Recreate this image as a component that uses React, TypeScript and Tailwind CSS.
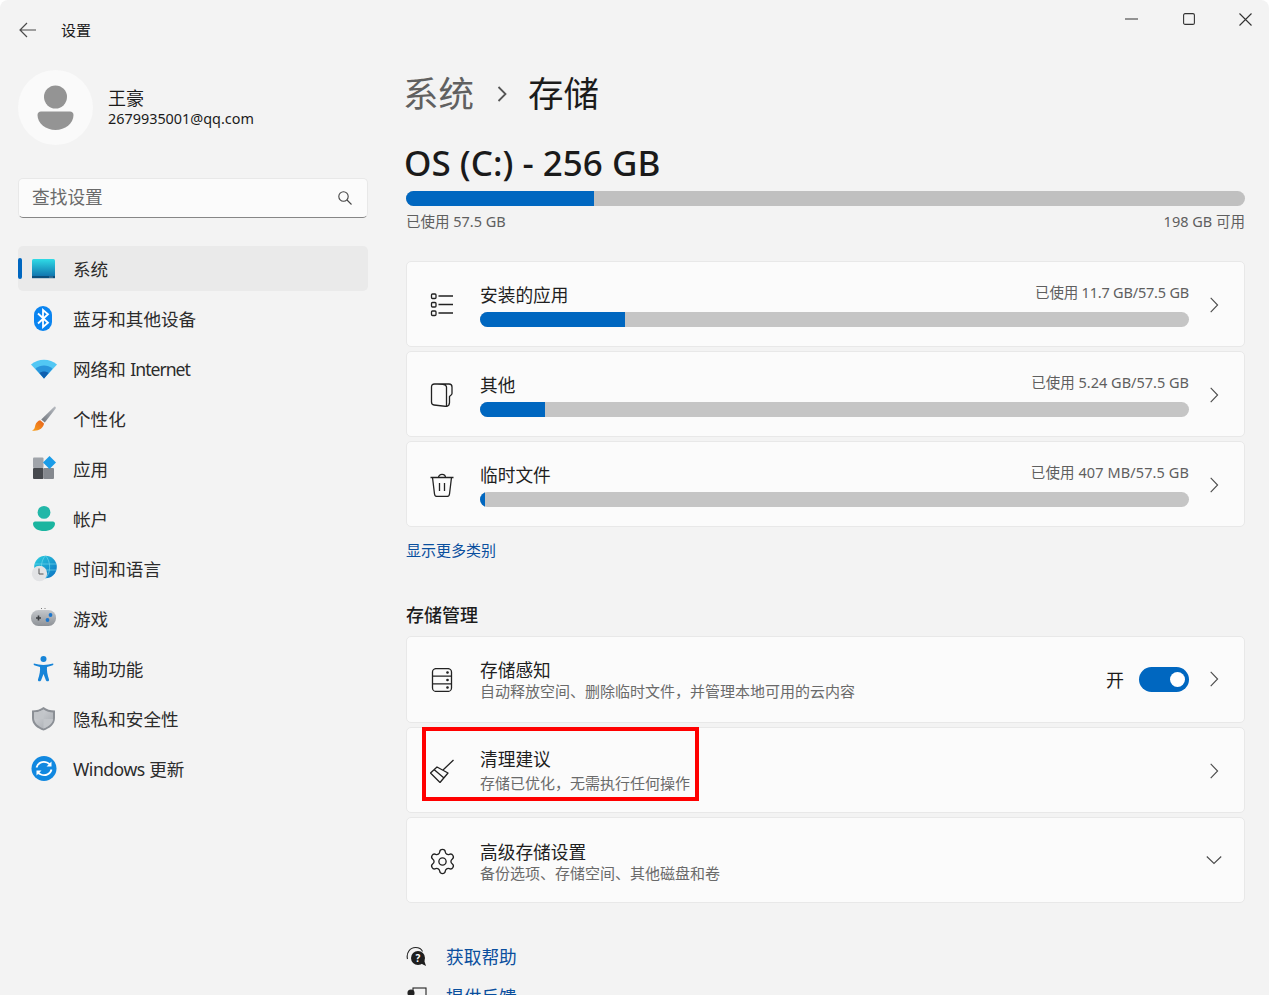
import React from "react";
import { Settings } from "lucide-react";

const Chevron = ({ className = "" }: { className?: string }) => (
  <svg width="16" height="16" viewBox="0 0 16 16" fill="none" stroke="#4a4a4a" strokeWidth="1.1" className={`shrink-0 ${className}`}>
    <path d="M4.7 0.8 11.6 8 4.7 15.2" />
  </svg>
);

const IconSlot = ({ children }: { children: React.ReactNode }) => (
  <svg width="28" height="28" viewBox="0 0 28 28" className="shrink-0">{children}</svg>
);

const navIcons: Record<string, React.ReactNode> = {
  system: (
    <IconSlot>
      <defs>
        <linearGradient id="sys" x1="0" y1="0" x2="0" y2="1">
          <stop offset="0" stopColor="#2fdbe6" />
          <stop offset="1" stopColor="#0d6aa8" />
        </linearGradient>
      </defs>
      <rect x="2" y="4" width="23" height="19" rx="1.5" fill="url(#sys)" />
      <rect x="2" y="21" width="23" height="2.2" fill="#0b4f7c" />
      <circle cx="20" cy="22" r=".5" fill="#cfe8f5" />
      <circle cx="22" cy="22" r=".5" fill="#cfe8f5" />
    </IconSlot>
  ),
  bluetooth: (
    <IconSlot>
      <rect x="4" y="1" width="18" height="25" rx="9" fill="#0a84f0" />
      <path d="M8 8.500 18 17.800 13 22V5L18 9.200 8 18.500" fill="none" stroke="#fff" strokeWidth="1.8" />
    </IconSlot>
  ),
  wifi: (
    <IconSlot>
      <path d="M1 9.500C8 3 20 3 27 9.500L14 23.500Z" fill="#52c7f4" />
      <path d="M5.500 13.800C10.500 9.500 17.500 9.500 22.500 13.800L14 23.500Z" fill="#2a95dc" />
      <path d="M9.500 18C12 16 16 16 18.500 18L14 23.500Z" fill="#0f5fae" />
    </IconSlot>
  ),
  brush: (
    <IconSlot>
      <defs>
        <linearGradient id="brh" x1="0" y1="1" x2="1" y2="0">
          <stop offset="0" stopColor="#70757c" />
          <stop offset="1" stopColor="#b8bcc2" />
        </linearGradient>
        <linearGradient id="brb" x1="0" y1="1" x2="1" y2="0">
          <stop offset="0" stopColor="#f9a11b" />
          <stop offset="1" stopColor="#e65f1c" />
        </linearGradient>
      </defs>
      <path d="M24.500 1.500C26 1.500 26 3 25.500 3.800L14.800 17.500 11.200 14.500Z" fill="url(#brh)" />
      <path d="M10.200 15.200 14 18.500C13.500 23 8.500 26.600 2 25.600 5 24 4.500 23 5.400 20 6 17.600 8 15.600 10.200 15.200Z" fill="url(#brb)" />
    </IconSlot>
  ),
  apps: (
    <IconSlot>
      <rect x="3" y="2.500" width="10.500" height="10.500" fill="#a0a4aa" rx="1" />
      <rect x="3" y="13" width="10.500" height="11" fill="#46494e" rx="1" />
      <rect x="13.500" y="13" width="10.500" height="11" fill="#84888e" rx="1" />
      <path d="M19.500 1 26 7.500 19.500 14 13 7.500Z" fill="#1a9ce8" />
    </IconSlot>
  ),
  account: (
    <IconSlot>
      <circle cx="14" cy="7.400" r="6.400" fill="#22b7a8" />
      <path d="M3 18.500C3 17.500 4 16.500 5 16.500H23C24 16.500 25 17.500 25 18.500 25 23.500 19.500 26 14 26 8.500 26 3 23.500 3 18.500Z" fill="#1ab5a0" />
    </IconSlot>
  ),
  time: (
    <IconSlot>
      <defs>
        <linearGradient id="glb" x1="0" y1="0" x2="1" y2="1">
          <stop offset="0" stopColor="#2bd0df" />
          <stop offset="1" stopColor="#0b6fc2" />
        </linearGradient>
      </defs>
      <circle cx="15.500" cy="12" r="11.300" fill="url(#glb)" />
      <path d="M15.500 .7C10 6 10 18 15.500 23.300 21 18 21 6 15.500 .7ZM4.500 9H26.500M4.500 15H26.500" fill="none" stroke="#7adcf0" strokeWidth=".6" />
      <circle cx="9.500" cy="18.500" r="7.700" fill="#e2e3e5" />
      <path d="M9 13.500V19H13.500" fill="none" stroke="#555" strokeWidth="1" />
    </IconSlot>
  ),
  game: (
    <IconSlot>
      <defs>
        <linearGradient id="gm" x1="0" y1="0" x2="0" y2="1">
          <stop offset="0" stopColor="#c4c7cb" />
          <stop offset="1" stopColor="#8e9297" />
        </linearGradient>
      </defs>
      <rect x="1" y="5" width="25" height="16" rx="7.500" fill="url(#gm)" />
      <path d="M6 13H11M8.500 10.500V15.500" stroke="#3c3f43" strokeWidth="1.6" />
      <circle cx="20.500" cy="10" r="1.900" fill="#1c76cc" />
      <circle cx="17.500" cy="15" r="1.900" fill="#1c76cc" />
      <circle cx="11.500" cy="3.500" r=".5" fill="#555" />
      <circle cx="15" cy="3.500" r=".5" fill="#555" />
    </IconSlot>
  ),
  access: (
    <IconSlot>
      <circle cx="13.500" cy="4" r="3" fill="#1684d8" />
      <path d="M4 8.600C3 9.200 4 10.600 5 10.600L10 12C10.400 15 9.600 20 8 24.500 7.400 26.500 10 27 11 25.400L13.500 19 16 25.400C17 27 19.600 26.500 19 24.500 17.400 20 16.600 15 17 12L22 10.600C23 10.600 24 9.200 23 8.600 20 9.400 17 10 13.500 10 10 10 7 9.400 4 8.600Z" fill="#1684d8" />
    </IconSlot>
  ),
  shield: (
    <IconSlot>
      <defs>
        <linearGradient id="shl" x1="0" y1="0" x2="1" y2="1">
          <stop offset="0" stopColor="#d6d8dc" />
          <stop offset="1" stopColor="#a4a8ad" />
        </linearGradient>
      </defs>
      <path d="M13.500 2C16.500 4.500 20.500 5.500 25 5.500V13C25 19.500 19.500 23.500 13.500 25.500 7.500 23.500 2 19.500 2 13V5.500C6.500 5.500 10.500 4.500 13.500 2Z" fill="#8b8f95" />
      <path d="M13.500 4.500C16.500 6.500 19.500 7.500 23 7.500V13C23 18 18.500 21.500 13.500 23.500 8.500 21.500 4 18 4 13V7.500C7.500 7.500 10.500 6.500 13.500 4.500Z" fill="url(#shl)" />
      <path d="M13.500 4.500V14H4V7.500C7.500 7.500 10.500 6.500 13.500 4.500ZM13.500 14H23C23 18 18.500 21.500 13.500 23.500Z" fill="#c2c5c9" />
    </IconSlot>
  ),
  update: (
    <IconSlot>
      <circle cx="14" cy="13.500" r="12.500" fill="#1188e0" />
      <path d="M6.500 12.500C7.500 8 12.500 5.800 17 7.500 18.500 8.100 19.700 9.200 20.300 10.300M21.500 14.500C20.500 19 15.500 21.200 11 19.500 9.500 18.900 8.300 17.800 7.700 16.700" fill="none" stroke="#fff" strokeWidth="1.800" />
      <path d="M21.500 6.500V11.500H16.500ZM6.500 20.500V15.500H11.500Z" fill="#fff" />
    </IconSlot>
  ),
};

const navItems: [string, React.ReactNode][] = [
  ["system", "系统"],
  ["bluetooth", "蓝牙和其他设备"],
  ["wifi", <>网络和 <span className="tracking-[-1px]">Internet</span></>],
  ["brush", "个性化"],
  ["apps", "应用"],
  ["account", "帐户"],
  ["time", "时间和语言"],
  ["game", "游戏"],
  ["access", "辅助功能"],
  ["shield", "隐私和安全性"],
  ["update", <><span className="tracking-[-0.5px]">Windows</span> 更新</>],
];

const Line = ({ children, className = "" }: { children: React.ReactNode; className?: string }) => (
  <svg width="24" height="24" viewBox="0 0 24 24" fill="none" stroke="#222222" strokeWidth="1.3" className={`shrink-0 ${className}`}>{children}</svg>
);

const storageRows = [
  {
    title: "安装的应用",
    used: "已使用 11.7 GB/57.5 GB",
    usedClass: "tracking-[-0.2px]",
    fill: 145,
    icon: (
      <Line className="mt-[2px]">
        <rect x="1.500" y="1" width="4.500" height="4.500" rx="1" />
        <rect x="1.500" y="9.500" width="4.500" height="4.500" rx="1" />
        <rect x="1.500" y="18" width="4.500" height="4.500" rx="1" />
        <path d="M8.500 3H23M8.500 11.500H23M8.500 20H23" />
      </Line>
    ),
  },
  {
    title: "其他",
    used: "已使用 5.24 GB/57.5 GB",
    usedClass: "",
    fill: 65,
    icon: (
      <Line className="mt-[2px]">
        <path d="M4.500 1H19C21 1 22 2 22 4V10.500C22 12 20 12.500 19.500 13.500V19.500C19.500 21.500 18.500 23 16.500 23.500L4 22C2.500 21.800 1.500 20.800 1.500 19V4C1.500 2 2.500 1 4.500 1ZM4.500 1C9 1 16.500 .5 16.500 4V23.500" />
      </Line>
    ),
  },
  {
    title: "临时文件",
    used: "已使用 407 MB/57.5 GB",
    usedClass: "tracking-[0.1px]",
    fill: 5,
    icon: (
      <Line className="mt-[2px]">
        <path d="M.5 4.500H23.500M8.500 4.500C8.500 .3 15.500 .3 15.500 4.500M2.500 4.500 4.500 21C4.700 22.800 5.800 23.500 7 23.500H17C18.200 23.500 19.300 22.800 19.500 21L21.500 4.500M9.500 10V18M14.500 10V18" />
      </Line>
    ),
  },
];

const Bar = ({ fill, track }: { fill: number; track: string }) => (
  <div className={`h-[15px] rounded-full overflow-hidden ${track}`}>
    <div className="h-full bg-[#0067c0]" style={{ width: fill }} />
  </div>
);

export default function App() {
  return (
    <div className="h-[995px] w-[1269px] overflow-hidden flex rounded-t-lg bg-[#f3f3f3] text-[#1b1b1b] font-['Noto_Sans','Noto_Sans_CJK_SC',sans-serif]">
      <aside className="w-[406px] shrink-0 pl-[18px] pr-[38px]">
        <div className="h-[60px] flex items-center">
          <svg width="18" height="16" viewBox="0 0 18 16" fill="none" stroke="#4a4a4a" strokeWidth="1.2" className="ml-[1px]">
            <path d="M1 8H17M8 1 1 8 8 15" />
          </svg>
          <span className="ml-[24px] text-[15px]">设置</span>
        </div>
        <div className="h-[75px] mt-[10px] flex items-center">
          <div className="size-[75px] rounded-full bg-[#fafafa] flex items-center justify-center">
            <svg width="37" height="46" viewBox="0 0 37 46">
              <circle cx="18.500" cy="12" r="11.500" fill="#949494" />
              <path d="M0.500 30C0.500 28 2 26.500 4 26.500H33C35 26.500 36.500 28 36.500 30 36.500 38.500 28 45 18.500 45 9 45 .5 38.500 .5 30Z" fill="#949494" />
            </svg>
          </div>
          <div className="ml-[15px] -mt-[2px]">
            <div className="text-[18px] leading-[24px]">王豪</div>
            <div className="text-[14.400px] leading-[18px]">2679935001@qq.com</div>
          </div>
        </div>
        <div className="mt-[33px] h-[40px] rounded-[5px] bg-[#fbfbfb] border border-[#e8e8e8] border-b-[#868686] flex items-center justify-between pl-[13px] pr-[15px]">
          <span className="text-[17.700px] text-[#6a6a6a] -mt-[2px]">查找设置</span>
          <svg width="14" height="14" viewBox="0 0 14 14" fill="none" stroke="#444" strokeWidth="1.100">
            <circle cx="5.500" cy="5.500" r="4.700" />
            <path d="M9 9 13.500 13.500" />
          </svg>
        </div>
        <nav className="mt-[28px] flex flex-col gap-[5px]">
          {navItems.map(([k, label], i) => (
            <div key={k} className={`relative h-[45px] rounded-[5px] flex items-center pl-[12px] gap-[15px] text-[17.600px] text-[#2b2b2b] ${i === 0 ? "bg-[#eaeaea]" : ""}`}>
              {i === 0 && <span className="absolute left-0 top-[12px] h-[21px] w-[4px] rounded-full bg-[#0067c0]" />}
              {navIcons[k]}
              <span className="pt-[2px]">{label}</span>
            </div>
          ))}
        </nav>
      </aside>

      <main className="flex-1 min-w-0">
        <div className="h-[38px] flex items-center justify-end gap-[44px] pr-[17px]">
          <div className="w-[13px] flex justify-center">
            <svg width="13" height="2" viewBox="0 0 13 2"><path d="M0 1H13" stroke="#333" strokeWidth="1.100" /></svg>
          </div>
          <div className="w-[13px] flex justify-center">
            <svg width="12" height="12" viewBox="0 0 12 12" fill="none" stroke="#333" strokeWidth="1.100"><rect x=".6" y=".6" width="10.800" height="10.800" rx="1.500" /></svg>
          </div>
          <div className="w-[13px] flex justify-center">
            <svg width="13" height="13" viewBox="0 0 13 13" fill="none" stroke="#333" strokeWidth="1.100"><path d="M.5 .5 12.500 12.500M12.500 .5 .5 12.500" /></svg>
          </div>
        </div>

        <div className="pr-[24px]">
          <div className="mt-[12px] h-[88px] flex items-center text-[35.500px] leading-none">
            <span className="-ml-[3px] text-[#606060]">系统</span>
            <svg width="12" height="18" viewBox="0 0 12 18" fill="none" stroke="#555" strokeWidth="1.800" className="ml-[22px] mr-[20px]"><path d="M2.500 2 9.500 9 2.500 16" /></svg>
            <span className="text-[#1b1b1b]">存储</span>
          </div>
          <h1 className="-mt-[2px] -ml-[2px] h-[52px] flex items-center text-[35px] font-medium leading-none text-[#1a1a1a]">OS (C:) - 256 GB</h1>
          <div className="mt-[3px]">
            <Bar fill={188} track="bg-[#c0c0c0]" />
          </div>
          <div className="mt-[5px] flex justify-between text-[14.500px] leading-[20px] text-[#5f5f5f]">
            <span>已使用 57.5 GB</span>
            <span>198 GB 可用</span>
          </div>

          <div className="mt-[30px] flex flex-col gap-[4px]">
            {storageRows.map((r) => (
              <div key={r.title} className="h-[86px] rounded-[5px] bg-[#fbfbfb] border border-[#e8e8e8] flex items-center pl-[23px] pr-[22px]">
                {r.icon}
                <div className="flex-1 ml-[26px] mr-[17px]">
                  <div className="mt-[2px] h-[24px] flex justify-between items-center">
                    <span className="text-[17.700px] text-[#1f1f1f]">{r.title}</span>
                    <span className={`text-[14.500px] text-[#5f5f5f] -mt-[6px] ${r.usedClass}`}>{r.used}</span>
                  </div>
                  <div className="mt-[4px]">
                    <Bar fill={r.fill} track="bg-[#c5c5c5]" />
                  </div>
                </div>
                <Chevron className="mt-[2px]" />
              </div>
            ))}
          </div>

          <div className="mt-[13px] text-[15px] leading-[20px] text-[#0a4f9e]">显示更多类别</div>
          <div className="mt-[43px] text-[18px] leading-[24px] font-medium text-[#1b1b1b]">存储管理</div>

          <div className="mt-[9px] flex flex-col gap-[4px]">
            <div className="h-[87px] rounded-[5px] bg-[#fbfbfb] border border-[#e8e8e8] flex items-center pl-[23px] pr-[22px]">
              <Line>
                <rect x="2.500" y=".6" width="19" height="22.800" rx="3.500" />
                <path d="M2.500 8.200H21.500M2.500 15.800H21.500" />
                <circle cx="17.500" cy="4.500" r=".7" fill="#222" />
                <circle cx="17.500" cy="12" r=".7" fill="#222" />
                <circle cx="17.500" cy="19.500" r=".7" fill="#222" />
              </Line>
              <div className="flex-1 ml-[26px]">
                <div className="text-[17.700px] leading-[22px] text-[#1f1f1f]">存储感知</div>
                <div className="text-[15px] leading-[20px] text-[#6a6a6a]">自动释放空间、删除临时文件，并管理本地可用的云内容</div>
              </div>
              <span className="text-[18px] mr-[15px] mt-[2px]">开</span>
              <div className="w-[50px] h-[25px] rounded-full bg-[#0067c0] flex items-center justify-end pr-[4px] mr-[17px]">
                <span className="size-[15px] rounded-full bg-white" />
              </div>
              <Chevron className="-mt-[2px]" />
            </div>

            <div className="relative h-[86px] rounded-[5px] bg-[#fbfbfb] border border-[#e8e8e8] flex items-center pl-[23px] pr-[22px]">
              <div className="absolute -top-[1px] left-[15px] w-[277px] h-[74px] border-[4px] border-[#ff0000]" />
              <Line className="mt-[2px]">
                <path d="M23.500 1 13 11M7 8 18 14 10 23.500 0.500 14ZM4 10.500 14 19" strokeLinejoin="round" />
              </Line>
              <div className="flex-1 ml-[26px]">
                <div className="text-[17.700px] leading-[24px] text-[#1f1f1f]">清理建议</div>
                <div className="text-[15px] leading-[20px] mt-[2px] text-[#6a6a6a]">存储已优化，无需执行任何操作</div>
              </div>
              <Chevron className="mt-[2px]" />
            </div>

            <div className="h-[86px] rounded-[5px] bg-[#fbfbfb] border border-[#e8e8e8] flex items-center pl-[23px] pr-[22px]">
              <Settings size={29} strokeWidth={1.1} color="#222222" className="shrink-0 -ml-[2.500px] -mr-[2.500px] mt-[3px]" />
              <div className="flex-1 ml-[26px] mt-[4px]">
                <div className="text-[17.700px] leading-[22px] text-[#1f1f1f]">高级存储设置</div>
                <div className="text-[15px] leading-[20px] text-[#6a6a6a]">备份选项、存储空间、其他磁盘和卷</div>
              </div>
              <svg width="16" height="16" viewBox="0 0 16 16" fill="none" stroke="#4a4a4a" strokeWidth="1.100" className="shrink-0">
                <path d="M.8 4.500 8 11.500 15.200 4.500" />
              </svg>
            </div>
          </div>

          <div className="mt-[40px] flex items-center h-[28px]">
            <svg width="22" height="22" viewBox="0 0 22 22" className="shrink-0">
              <path d="M1.500 13C0 7 4 1.500 9.500 1.500 13 1.500 15.500 3 16.500 5.500" fill="none" stroke="#222" strokeWidth="1.100" />
              <circle cx="12" cy="12" r="7" fill="#1e1e1e" />
              <path d="M15 17.500 20 20 18 14Z" fill="#1e1e1e" />
              <text x="12" y="15.500" fontSize="10" fontWeight="700" textAnchor="middle" fill="#fff">?</text>
            </svg>
            <span className="ml-[18px] text-[17.700px] text-[#0a4f9e]">获取帮助</span>
          </div>
          <div className="mt-[12px] flex items-center h-[28px]">
            <svg width="22" height="22" viewBox="0 0 22 22" fill="none" stroke="#222" strokeWidth="1.100" className="shrink-0">
              <rect x="7" y="2" width="13" height="11" />
              <circle cx="5" cy="7" r="3" fill="#222" />
              <path d="M1 16C1 12 9 12 9 16V20H1Z" fill="#222" />
            </svg>
            <span className="ml-[18px] text-[17.700px] text-[#0a4f9e]">提供反馈</span>
          </div>
        </div>
      </main>
    </div>
  );
}
